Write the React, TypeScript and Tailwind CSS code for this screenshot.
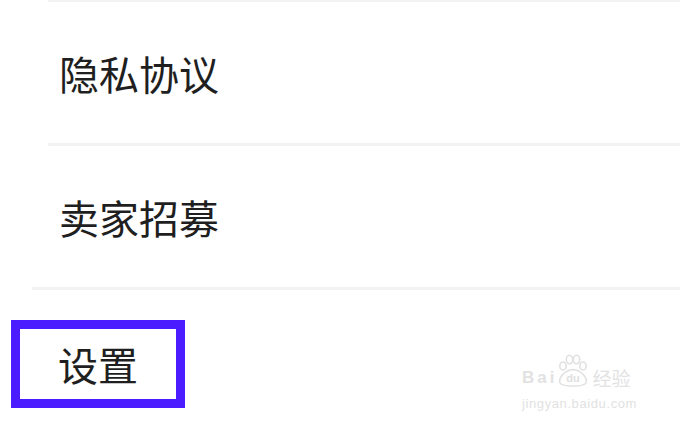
export default function App() {
  return (
    <div
      className="relative h-[432px] w-[680px] overflow-hidden bg-white text-[#1f1f1f]"
      style={{ fontFamily: '"Noto Sans CJK SC", "Noto Sans", sans-serif' }}
    >
      <div className="ml-[48px] h-[2px] bg-[#f2f2f2]" />
      <MenuRow label="隐私协议" />
      <div className="ml-[48px] h-[3px] bg-[#f2f2f2]" />
      <MenuRow label="卖家招募" />
      <div className="ml-[32px] h-[3px] bg-[#f2f2f2]" />

      <div className="ml-[11px] mt-[30px] flex h-[88px] w-[174px] items-center border-[9px] border-[#4a1cff] pl-[38px]">
        <span className="text-[40px] leading-none">设置</span>
      </div>

      <Watermark />
    </div>
  );
}

function MenuRow({ label }: { label: string }) {
  return (
    <div className="flex h-[141px] items-center pl-[59px]">
      <span className="text-[40px] leading-none">{label}</span>
    </div>
  );
}

function Watermark() {
  return (
    <div className="absolute left-[522px] top-[354px] flex flex-col items-start text-[#e2e2e2]">
      <div className="flex items-end">
        <span
          className="mb-[1px] text-[17px] font-bold leading-none tracking-[3px]"
          style={{ fontFamily: '"Liberation Sans", sans-serif' }}
        >
          Bai
        </span>
        <svg width="36" height="34" viewBox="0 0 36 34" className="-ml-[2px] -mb-[1px]" fill="none" stroke="#e0e0e0" strokeWidth="1.6">
          <ellipse cx="8" cy="12" rx="3.2" ry="4" />
          <ellipse cx="14.5" cy="5.5" rx="3.2" ry="4.2" />
          <ellipse cx="21.5" cy="5.5" rx="3.2" ry="4.2" />
          <ellipse cx="28" cy="12" rx="3.2" ry="4" />
          <path d="M5 29 C3 24 10 16 18 15.5 C26 16 33 24 31 29 C29 33 7 33 5 29 Z" />
          <text x="18" y="28" textAnchor="middle" fontSize="11" fontWeight="bold" fill="#e0e0e0" stroke="none" fontFamily="Liberation Sans, sans-serif">
            du
          </text>
        </svg>
        <span className="ml-[1px] text-[19px] leading-none">经验</span>
      </div>
      <span
        className="mt-[10px] text-[13px] leading-none tracking-[0.6px]"
        style={{ fontFamily: '"Liberation Sans", sans-serif' }}
      >
        jingyan.baidu.com
      </span>
    </div>
  );
}
